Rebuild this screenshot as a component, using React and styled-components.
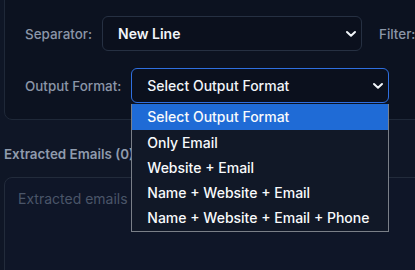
import React from "react";
import styled, { createGlobalStyle } from "styled-components";

const Global = createGlobalStyle`
  html, body {
    margin: 0;
    background: #0f1626;
    overflow: hidden;
    font-family: Inter, "Noto Sans", sans-serif;
  }
`;

const Page = styled.div`
  width: 640px;
  padding-left: 4px;
`;

const Card = styled.div`
  margin-top: -14px;
  padding: 29px 20px 16px;
  border: 1px solid #1f2838;
  border-radius: 8px;
  background: #0c1220;
  display: flex;
  flex-direction: column;
  gap: 17px;
`;

const Row = styled.div`
  display: flex;
  align-items: center;
`;

const Label = styled.span`
  font-size: 13.4px;
  font-weight: 500;
  color: #8b96a8;
  margin-right: 10px;
  margin-left: ${(p) => p.$left || 0}px;
  white-space: nowrap;
`;

const SelectWrap = styled.div`
  position: relative;
`;

const SelectBox = styled.div`
  box-sizing: border-box;
  width: ${(p) => p.$w}px;
  height: 35px;
  display: flex;
  align-items: center;
  justify-content: space-between;
  padding: 0 4px 0 15px;
  border: 1px solid ${(p) => (p.$focus ? "#2f6fe0" : "#263042")};
  border-radius: 6px;
  background: #0b101d;
  color: #f1f5f9;
  font-size: 14px;
  font-weight: ${(p) => (p.$focus ? 500 : 600)};
`;

const Chevron = () => (
  <svg width="12" height="8" viewBox="0 0 12 8">
    <polyline
      points="2,2 6,5.8 10,2"
      fill="none"
      stroke="#f1f5f9"
      strokeWidth="2"
      strokeLinecap="round"
      strokeLinejoin="round"
    />
  </svg>
);

const Menu = styled.ul`
  position: absolute;
  top: 36px;
  left: 0;
  box-sizing: border-box;
  width: 258px;
  margin: 0;
  padding: 0 0 1px;
  list-style: none;
  background: #111827;
  border: 1px solid #7a7f88;
  border-top: none;
  z-index: 2;
`;

const Option = styled.li`
  height: ${(p) => (p.$active ? 26 : 25)}px;
  line-height: ${(p) => (p.$active ? 26 : 25)}px;
  padding-left: 15px;
  font-size: 14px;
  font-weight: 500;
  color: #f8fafc;
  background: ${(p) => (p.$active ? "#1f6bd6" : "transparent")};
`;

const Section = styled.div`
  margin-top: 24px;
`;

const Heading = styled.div`
  font-size: 13.4px;
  font-weight: 600;
  color: #8f9bad;
  height: 20px;
  line-height: 20px;
`;

const Output = styled.div`
  margin-top: 13px;
  height: 140px;
  box-sizing: border-box;
  padding: 12px 13px;
  border: 1px solid #222b3b;
  border-radius: 8px;
  background: #0f1628;
  font-size: 14px;
  color: #4a5568;
`;

const options = [
  "Select Output Format",
  "Only Email",
  "Website + Email",
  "Name + Website + Email",
  "Name + Website + Email + Phone",
];

export default function App() {
  return (
    <Page>
      <Global />
      <Card>
        <Row>
          <Label>Separator:</Label>
          <SelectBox $w={260}>
            New Line
            <Chevron />
          </SelectBox>
          <Label $left={17}>Filter:</Label>
        </Row>
        <Row>
          <Label>Output Format:</Label>
          <SelectWrap>
            <SelectBox $w={258} $focus>
              Select Output Format
              <Chevron />
            </SelectBox>
            <Menu>
              {options.map((o, i) => (
                <Option key={o} $active={i === 0}>
                  {o}
                </Option>
              ))}
            </Menu>
          </SelectWrap>
        </Row>
      </Card>
      <Section>
        <Heading>Extracted Emails (0)</Heading>
        <Output>Extracted emails will appear here...</Output>
      </Section>
    </Page>
  );
}
